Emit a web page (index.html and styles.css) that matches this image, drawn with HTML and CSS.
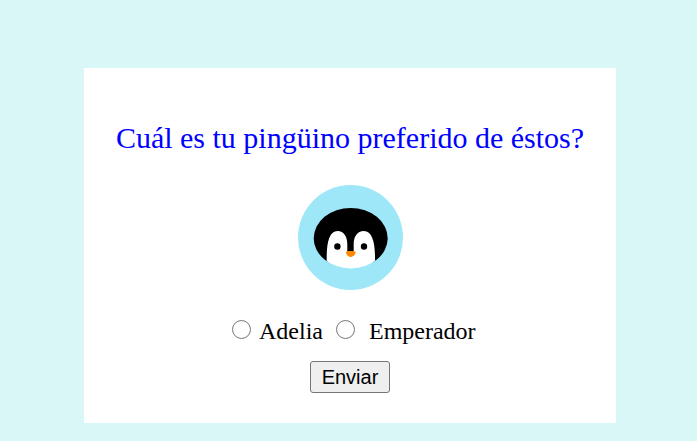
FILE: index.html
```html
<!DOCTYPE html>
<html lang="es">
<head>
<meta charset="utf-8">
<title>Pingüinos</title>
<link rel="stylesheet" href="styles.css">
</head>
<body>
<form class="card">
  <h1 class="question">Cuál es tu pingüino preferido de éstos?</h1>
  <svg class="penguin" viewBox="0 0 105 105" aria-hidden="true">
    <clipPath id="head"><ellipse cx="52.700" cy="53.200" rx="37" ry="30.200"/></clipPath>
    <circle cx="52.500" cy="52.500" r="52.500" fill="#9de7f8"/>
    <g clip-path="url(#head)">
      <path d="M0 0H105V77.500H0Z"/>
      <path d="M0 77.200H105V90H0Z" fill="#9de7f8"/>
      <path d="M28.700 90V72C28.700 56 32 46 39.500 46C46 46 49.300 52 49.300 59V67H55.700V59C55.700 52 59 46 66 46C73.500 46 77 56 77 72V90Z" fill="#fff"/>
    </g>
    <circle cx="39.400" cy="61.500" r="3.200"/>
    <circle cx="66" cy="61.500" r="3.200"/>
    <path d="M48 67.300C48 65.900 50 66 52.700 66S57.600 65.900 57.600 67.300C57.600 69.600 55 72 52.700 72S48 69.600 48 67.300Z" fill="#ff8800"/>
  </svg>
  <div class="options">
    <input class="radio" type="radio" name="p" id="a"><label class="first" for="a">Adelia</label>
    <input class="radio" type="radio" name="p" id="e"><label class="second" for="e">Emperador</label>
  </div>
  <button class="send" type="button">Enviar</button>
</form>
</body>
</html>
```
FILE: styles.css
```css
body {
  box-sizing: border-box;
  min-height: 441px;
  margin: 0;
  padding-top: 68px;
  background: #d9f7f7;
  font-family: "Liberation Serif", serif;
}
.card {
  box-sizing: border-box;
  width: 532px;
  height: 355px;
  margin-left: 84px;
  padding-top: 52px;
  background: #fff;
  display: flex;
  flex-direction: column;
  align-items: center;
}
.question {
  margin: 0;
  font-size: 30px;
  line-height: 36px;
  font-weight: 400;
  color: #00f;
  white-space: nowrap;
}
.penguin { width: 105px; height: 105px; margin-top: 29px; }
.options {
  display: flex;
  align-items: center;
  margin-top: 26px;
  height: 30px;
  width: 236px;
  font-size: 24px;
}
.radio {
  appearance: none;
  box-sizing: border-box;
  flex: none;
  width: 19px;
  height: 19px;
  margin: 0 0 4px;
  border: 1px solid #767676;
  border-radius: 50%;
  background: #fff;
}
.first { margin: 0 13px 0 8px; }
.second { margin-left: 14px; }
.send {
  box-sizing: border-box;
  width: 80px;
  height: 32px;
  margin-top: 15px;
  padding: 0;
  border: 1px solid #767676;
  border-radius: 3px;
  background: #efefef;
  color: #000;
  font: 20px "Liberation Sans", sans-serif;
}
```
